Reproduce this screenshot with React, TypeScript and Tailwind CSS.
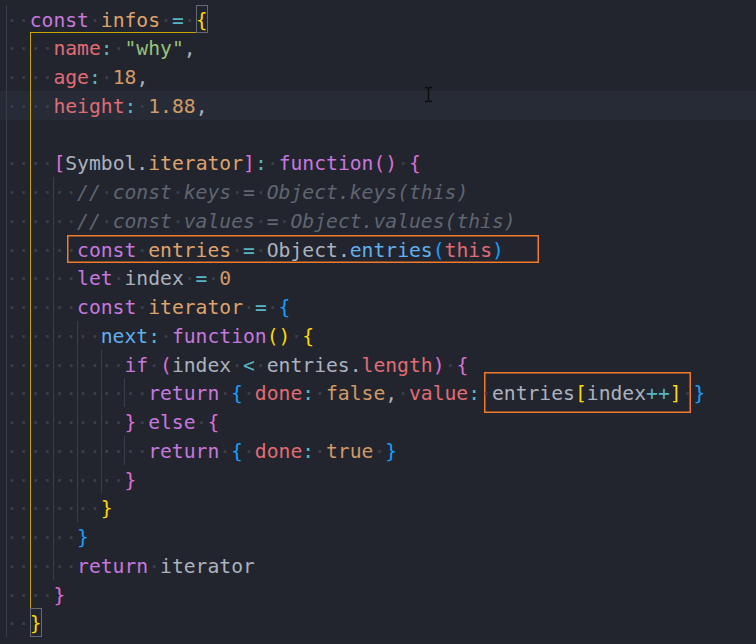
import React from "react";

type Tok = [string, string];

const kw = "text-[#c678dd]";
const decl = "text-[#dfa26c]";
const num = "text-[#d19a66]";
const prop = "text-[#e06c75]";
const str = "text-[#98c379]";
const op = "text-[#56b6c2]";
const plain = "text-[#abb2bf]";
const cmt = "text-[#5f6571] italic";
const fn = "text-[#61afef]";
const b1 = "text-[#ffd700]";
const b2 = "text-[#da70d6]";
const b3 = "text-[#179fff]";

// renders a token, spaces shown as faint dots like editor whitespace
const Tokens = ({ toks }: { toks: Tok[] }) => (
  <>
    {toks.map(([t, c], i) =>
      t === " " ? (
        <span key={i} className="translate-y-[1.5px] text-[#3b3f4b]">
          ·
        </span>
      ) : (
        <span key={i} className={"translate-y-[1.5px] " + c}>
          {t}
        </span>
      )
    )}
  </>
);

const sp: Tok = [" ", ""];

interface LineProps {
  indent: number;
  blank?: boolean;
  active?: boolean;
  children?: React.ReactNode;
}

const Line = ({ indent, blank, active, children }: LineProps) => {
  const units = (indent + 2) / 2;
  return (
    <div
      className={
        "flex h-[28.76px] items-center whitespace-pre pl-[6px] " +
        (active ? "bg-[#272b36]" : "")
      }
    >
      {Array.from({ length: units }).map((_, j) => (
        <span
          key={j}
          className={
            "flex h-full w-[23.7px] shrink-0 items-center text-[#3b3f4b] " +
            (j === 1
              ? "shadow-[inset_1px_0_0_#c8a400]"
              : "shadow-[inset_1px_0_0_#3a3e48]")
          }
        >
          <span className="translate-y-[1.5px]">{blank ? "" : "··"}</span>
        </span>
      ))}
      {children}
    </div>
  );
};

const IBeam = () => (
  <svg
    className="absolute left-[424px] top-[86px]"
    width="9"
    height="17"
    viewBox="0 0 9 17"
  >
    <path
      d="M1 1.5h3M5 1.5h3M4.5 1.5v14M1 15.5h3M5 15.5h3"
      stroke="#0b0b0b"
      strokeWidth="1.3"
      fill="none"
    />
  </svg>
);

export default function App() {
  return (
    <div className="relative h-[644px] w-[756px] overflow-hidden bg-[#22252d] pt-[4.6px] font-['DejaVu_Sans_Mono',monospace] text-[19.7px] leading-[28.76px]">
      <Line indent={0}>
        <span className="flex h-full items-center shadow-[inset_0_-1px_0_#c8a400]">
          <Tokens toks={[["const", kw], sp, ["infos", decl], sp, ["=", op], sp]} />
        </span>
        <span className={"flex h-full items-center shadow-[inset_0_0_0_1px_#656973] " + b1}>
          <span className="translate-y-[1.5px]">{"{"}</span>
        </span>
      </Line>
      <Line indent={2}>
        <Tokens toks={[["name", prop], [":", op], sp, ['"why"', str], [",", plain]]} />
      </Line>
      <Line indent={2}>
        <Tokens toks={[["age", prop], [":", op], sp, ["18", num], [",", plain]]} />
      </Line>
      <Line indent={2} active>
        <Tokens toks={[["height", prop], [":", op], sp, ["1.88", num], [",", plain]]} />
      </Line>
      <Line indent={2} blank />
      <Line indent={2}>
        <Tokens
          toks={[
            ["[", b2],
            ["Symbol", plain],
            [".", plain],
            ["iterator", decl],
            ["]", b2],
            [":", op],
            sp,
            ["function", kw],
            ["(", b2],
            [")", b2],
            sp,
            ["{", b2],
          ]}
        />
      </Line>
      <Line indent={4}>
        <Tokens
          toks={[
            ["//", cmt], sp, ["const", cmt], sp, ["keys", cmt], sp, ["=", cmt], sp,
            ["Object.keys(this)", cmt],
          ]}
        />
      </Line>
      <Line indent={4}>
        <Tokens
          toks={[
            ["//", cmt], sp, ["const", cmt], sp, ["values", cmt], sp, ["=", cmt], sp,
            ["Object.values(this)", cmt],
          ]}
        />
      </Line>
      <Line indent={4}>
        <span className="-ml-[10px] -mr-[35px] flex h-full items-center pl-[10px] pr-[35px] shadow-[inset_0_0_0_1.5px_#f27a2b]">
          <Tokens
            toks={[
              ["const", kw], sp, ["entries", decl], sp, ["=", op], sp,
              ["Object", plain], [".", plain], ["entries", fn], ["(", b3], ["this", prop], [")", b3],
            ]}
          />
        </span>
      </Line>
      <Line indent={4}>
        <Tokens toks={[["let", kw], sp, ["index", plain], sp, ["=", op], sp, ["0", num]]} />
      </Line>
      <Line indent={4}>
        <Tokens toks={[["const", kw], sp, ["iterator", decl], sp, ["=", op], sp, ["{", b3]]} />
      </Line>
      <Line indent={6}>
        <Tokens
          toks={[["next", fn], [":", op], sp, ["function", kw], ["(", b1], [")", b1], sp, ["{", b1]]}
        />
      </Line>
      <Line indent={8}>
        <Tokens
          toks={[
            ["if", kw], sp, ["(", b2], ["index", plain], sp, ["<", op], sp,
            ["entries", plain], [".", plain], ["length", prop], [")", b2], sp, ["{", b2],
          ]}
        />
      </Line>
      <Line indent={10}>
        <Tokens
          toks={[
            ["return", kw], sp, ["{", b3], sp, ["done", prop], [":", op], sp, ["false", num],
            [",", plain], sp, ["value", prop], [":", op], sp,
          ]}
        />
        <span className="-ml-[8px] -mr-[9.5px] flex h-[41px] shrink-0 items-center pl-[8px] pr-[9.5px] shadow-[inset_0_0_0_1.5px_#f27a2b]">
          <Tokens toks={[["entries", plain], ["[", b1], ["index", plain], ["++", op], ["]", b1]]} />
        </span>
        <Tokens toks={[sp, ["}", b3]]} />
      </Line>
      <Line indent={8}>
        <Tokens toks={[["}", b2], sp, ["else", kw], sp, ["{", b2]]} />
      </Line>
      <Line indent={10}>
        <Tokens
          toks={[["return", kw], sp, ["{", b3], sp, ["done", prop], [":", op], sp, ["true", num], sp, ["}", b3]]}
        />
      </Line>
      <Line indent={8}>
        <Tokens toks={[["}", b2]]} />
      </Line>
      <Line indent={6}>
        <Tokens toks={[["}", b1]]} />
      </Line>
      <Line indent={4}>
        <Tokens toks={[["}", b3]]} />
      </Line>
      <Line indent={4}>
        <Tokens toks={[["return", kw], sp, ["iterator", plain]]} />
      </Line>
      <Line indent={2}>
        <Tokens toks={[["}", b2]]} />
      </Line>
      <Line indent={0}>
        <span className={"flex h-full items-center shadow-[inset_0_0_0_1px_#656973] " + b1}>
          <span className="translate-y-[1.5px]">{"}"}</span>
        </span>
      </Line>
      <IBeam />
    </div>
  );
}
